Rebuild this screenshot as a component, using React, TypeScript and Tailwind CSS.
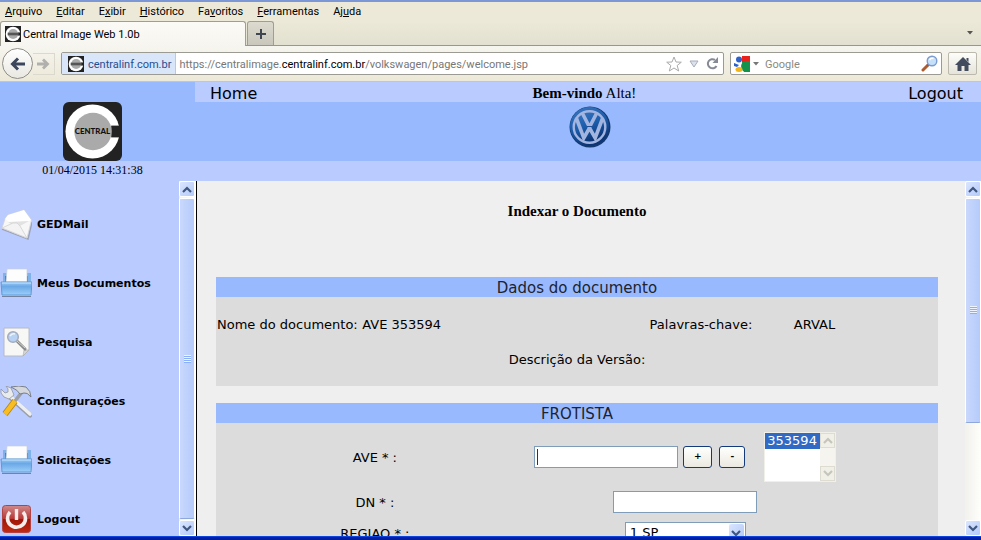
import React from "react";

const menus = [
  ["", "A", "rquivo"],
  ["", "E", "ditar"],
  ["E", "x", "ibir"],
  ["", "H", "istórico"],
  ["Fa", "v", "oritos"],
  ["", "F", "erramentas"],
  ["Aj", "u", "da"],
];

function CentralLogo({ className, label = true }: { className: string; label?: boolean }) {
  return (
    <svg viewBox="0 0 60 60" className={className} role="img" aria-label="Central">
      <rect width="60" height="60" rx={label ? 6 : 0} fill="#222" />
      <circle cx="30" cy="30" r="27.500" fill="#fff" />
      <path d="M49 24H60V36H49Z" fill="#222" />
      <circle cx="30.500" cy="30" r="19" fill="#aaa" />
      {label ? (
        <text x="12" y="33" fontFamily="Lato, 'Liberation Sans', sans-serif" fontWeight="900" fontSize="8" fill="#111">
          CENTRAL
        </text>
      ) : (
        <path d="M10 25H50V35H10Z" fill="#555" />
      )}
    </svg>
  );
}

function VwLogo() {
  return (
    <svg viewBox="0 0 42 42" className="size-[42px]" role="img" aria-label="Volkswagen">
      <defs>
        <linearGradient id="vw" x1="0" y1="0" x2="0.400" y2="1">
          <stop offset="0" stopColor="#3d78c0" />
          <stop offset="0.500" stopColor="#1d5fae" />
          <stop offset="1" stopColor="#0c3576" />
        </linearGradient>
      </defs>
      <circle cx="21" cy="21" r="20.500" fill="#15386f" />
      <circle cx="20.500" cy="20.500" r="19.500" fill="url(#vw)" />
      <circle cx="20.500" cy="21" r="15.800" fill="url(#vw)" stroke="#a2b4e0" strokeWidth="2.400" />
      <g fill="none" stroke="#a2b4e0" strokeWidth="3.600" strokeLinejoin="miter">
        <path d="M13.500 7.500L20.500 21L27.500 7.500" />
        <path d="M7.500 12.500L14.800 32L20.500 22L26.200 32L33.500 12.500" />
      </g>
      <path d="M18 20.500H23" stroke="#234f94" strokeWidth="1" />
    </svg>
  );
}

function MailIcon() {
  return (
    <svg viewBox="0 0 32 32" className="size-8" aria-hidden="true">
      <path d="M2 20L28 30L32 13" fill="none" stroke="#9ba3ba" strokeWidth="1.500" />
      <path d="M2 19L5 10L8 6L24 1L31.500 11L27 29Z" fill="#f7f7f7" stroke="#d4d4d4" strokeWidth="0.800" />
      <path d="M5 10L8 6L24 1L31 11L19 16L12 15Z" fill="#fff" />
      <path d="M8 13L29 12L20 17L18 15L14 14L12 16Z" fill="#e2e2e2" />
      <path d="M2 19L13 14L17 14L20 17L27 29Z" fill="#f3f3f3" stroke="#d0d0d0" strokeWidth="0.800" />
    </svg>
  );
}

function DrawerIcon() {
  return (
    <svg viewBox="0 0 32 32" className="size-8" aria-hidden="true">
      <defs>
        <linearGradient id="drawer" x1="0" y1="0" x2="0" y2="1">
          <stop offset="0" stopColor="#9ccbf5" />
          <stop offset="0.350" stopColor="#6ba8e6" />
          <stop offset="1" stopColor="#9ccffa" />
        </linearGradient>
      </defs>
      <path d="M3 5H31V16H3Z" fill="#7fb2e8" />
      <path d="M5 8H28V16H5Z" fill="#3e7cc4" />
      <path d="M7 1H27V14H6Z" fill="#fdfdfd" stroke="#c5cfdd" strokeWidth="0.700" />
      <path d="M1 14H32L31 27H2Z" fill="url(#drawer)" stroke="#5f9ad6" strokeWidth="1" />
      <path d="M2 15H31" stroke="#c4e2fb" />
      <path d="M2 28.500H31" stroke="#7482a0" />
    </svg>
  );
}

function SearchPageIcon() {
  return (
    <svg viewBox="0 0 32 32" className="size-8" aria-hidden="true">
      <path d="M4 1H29V23L23 29H4Z" fill="#f7f7f5" stroke="#b5bac6" />
      <path d="M29 23H24L23 29Z" fill="#d4d5d8" stroke="#aaa" strokeWidth="0.600" />
      <path d="M17 14L25 22" stroke="#888" strokeWidth="3" strokeLinecap="round" />
      <path d="M17 14L25 21" stroke="#d4d4d4" strokeWidth="1" strokeLinecap="round" />
      <circle cx="13" cy="10" r="5.300" fill="#b8d2f4" stroke="#a4acbd" strokeWidth="1.500" />
      <path d="M10 9Q12 6 15 7" stroke="#eef6ff" strokeWidth="1.500" fill="none" />
    </svg>
  );
}

function ToolsIcon() {
  return (
    <svg viewBox="0 0 32 32" className="size-8" aria-hidden="true">
      <path d="M10 11L30 29" stroke="#9a9ea8" strokeWidth="5" strokeLinecap="round" />
      <path d="M10 10L30 28" stroke="#eceef0" strokeWidth="3.600" strokeLinecap="round" />
      <path d="M6 0L11 2L14 9L9 13L4 11L1 7L1 3L5 7L8 6L8 3Z" fill="#e8eaec" stroke="#9094a0" strokeWidth="0.800" />
      <path d="M22 6L15 15" stroke="#9a9ea6" strokeWidth="3.600" />
      <path d="M11 1Q19 -1 26 1Q31 5 31 11Q27 6 24 7L20 8Q18 4 11 1Z" fill="#d4d8dc" stroke="#70757e" strokeWidth="0.900" />
      <path d="M15 15L5 28" stroke="#b88408" strokeWidth="6.200" />
      <path d="M15 15L5 28" stroke="#f8bd22" strokeWidth="4.600" />
    </svg>
  );
}

function PowerIcon() {
  return (
    <svg viewBox="0 0 32 32" className="size-8" aria-hidden="true">
      <defs>
        <linearGradient id="power" x1="0" y1="0" x2="0" y2="1">
          <stop offset="0" stopColor="#cf8a8c" />
          <stop offset="0.480" stopColor="#b93a38" />
          <stop offset="0.520" stopColor="#a01608" />
          <stop offset="1" stopColor="#c22a14" />
        </linearGradient>
      </defs>
      <rect x="2.500" y="1.500" width="28" height="27" rx="3" fill="url(#power)" stroke="#b04444" />
      <path d="M10 8A9 9 0 1 0 23 8" fill="none" stroke="#f6ecec" strokeWidth="3.600" />
      <path d="M16.500 5V16" stroke="#f6ecec" strokeWidth="3.400" />
    </svg>
  );
}

const sideItems = [
  { label: "GEDMail", Icon: MailIcon },
  { label: "Meus Documentos", Icon: DrawerIcon },
  { label: "Pesquisa", Icon: SearchPageIcon },
  { label: "Configurações", Icon: ToolsIcon },
  { label: "Solicitações", Icon: DrawerIcon },
  { label: "Logout", Icon: PowerIcon },
];

function Chevron({ up = false, color = "#3f5780" }: { up?: boolean; color?: string }) {
  return (
    <svg viewBox="0 0 10 7" className="h-[7px] w-[10px]" aria-hidden="true">
      <path d={up ? "M1 6L5 2L9 6" : "M1 1L5 5L9 1"} fill="none" stroke={color} strokeWidth="2.200" />
    </svg>
  );
}

function ScrollBar({ thumb }: { thumb: string }) {
  const end =
    "flex h-4 w-full shrink-0 items-center justify-center rounded-[2px] border border-white bg-linear-to-br from-[#dbe6ff] to-[#b4cafa]";
  return (
    <div className="flex w-4 shrink-0 flex-col bg-linear-to-r from-[#f2f1ec] to-[#fefefb]">
      <button className={end} aria-label="Rolar para cima"><Chevron up /></button>
      <div className="min-h-0 flex-1 py-px">
        <div className={`flex flex-col items-center justify-center rounded-[2px] border border-white border-b-[#8fa8dc] bg-linear-to-r from-[#c9d8fc] to-[#b5cbfb] ${thumb}`}>
          {[0, 1, 2, 3].map((n) => (
            <span key={n} className="h-[2px] w-[7px] border-t border-[#eef4ff] bg-[#8cb0f8]" />
          ))}
        </div>
      </div>
      <button className={end} aria-label="Rolar para baixo"><Chevron /></button>
    </div>
  );
}

function Browser() {
  return (
    <div className="shrink-0 border-t-2 border-[#7b97d6] bg-[#ece9d8] font-['Roboto','Liberation_Sans',sans-serif] text-[11px] text-black">
      <nav className="flex h-[19px] items-center gap-[14px] px-[5px]">
        {menus.map(([a, b, c]) => (
          <button key={c} className="leading-4">{a}<u>{b}</u>{c}</button>
        ))}
      </nav>
      <div className="flex h-[25px] items-stretch border-b border-[#99978c] bg-linear-to-b from-[#ece9d8] to-[#e2e0d0]">
        <div className="-mb-px flex w-[246px] items-center gap-[2px] rounded-t-[3px] border border-b-0 border-[#a09e93] bg-linear-to-b from-[#fbfaf6] to-[#f6f5ef] pl-1">
          <CentralLogo className="size-4" label={false} />
          <span className="pt-[3px]">Central Image Web 1.0b</span>
        </div>
        <button aria-label="Nova aba" className="ml-px flex w-[27px] items-center justify-center rounded-t-[3px] border border-b-0 border-[#a09e93] bg-linear-to-b from-[#dddbcf] to-[#c9c7bb]">
          <svg viewBox="0 0 10 10" className="size-[10px]"><path d="M5 0V10M0 5H10" stroke="#404650" strokeWidth="2" /></svg>
        </button>
        <button aria-label="Listar abas" className="mr-[8px] ml-auto">
          <svg viewBox="0 0 6 4" className="h-1 w-[6px]"><path d="M0 0H6L3 3.500Z" fill="#555" /></svg>
        </button>
      </div>
      <div className="flex h-9 items-center border-b border-[#c9c6b4] bg-linear-to-b from-[#f6f5ef] to-[#ece9d8] pr-1 pl-[2px]">
        <button aria-label="Voltar" className="flex size-[31px] items-center justify-center rounded-full border border-[#8f8e88] bg-linear-to-b from-white to-[#e9e8e2]">
          <svg viewBox="0 0 16 14" className="h-[14px] w-4"><path d="M8 1.500L2.500 7L8 12.500M3 7H15" fill="none" stroke="#3c475e" strokeWidth="3" /></svg>
        </button>
        <button aria-label="Avançar" className="flex h-[22px] w-[22px] items-center justify-center border border-l-0 border-[#dbd9ce]">
          <svg viewBox="0 0 13 12" className="h-3 w-[13px]"><path d="M6 1.500L10.500 6L6 10.500M0 6H10" fill="none" stroke="#b0b0ad" strokeWidth="2.800" /></svg>
        </button>
        <div className="ml-[6px] flex h-[23px] flex-1 items-stretch rounded-[2px] border border-[#9b9a93] bg-white">
          <div className="flex items-center gap-1 border-r border-[#b8c8e6] bg-[#d9e5f8] pr-1 pl-[6px] text-[#1f4f93]">
            <CentralLogo className="size-4" label={false} />
            <span className="pt-[3px]">centralinf.com.br</span>
          </div>
          <div role="textbox" aria-label="Endereço" tabIndex={0} className="flex flex-1 items-center pt-[3px] pl-[3px] text-[#777]">
            <span>https://centralimage.<span className="text-black">centralinf.com.br</span>/volkswagen/pages/welcome.jsp</span>
          </div>
          <div className="flex items-center gap-[7px] pr-1">
            <button aria-label="Favoritar"><svg viewBox="0 0 16 16" className="size-4"><path d="M8 1L10 6L15.300 6.200L11.200 9.500L12.700 15L8 12L3.300 15L4.800 9.500L0.700 6.200L6 6Z" fill="#fff" stroke="#aaa" /></svg></button>
            <button aria-label="Histórico de endereços"><svg viewBox="0 0 10 8" className="h-2 w-[10px]"><path d="M1 1H9L5 7Z" fill="#dde2ec" stroke="#a5adbb" /></svg></button>
            <button aria-label="Recarregar"><svg viewBox="0 0 13 13" className="size-[13px]"><path d="M10.500 9A4.600 4.600 0 1 1 9 2.900" fill="none" stroke="#858a94" strokeWidth="2" /><path d="M12 0V6H6.500Z" fill="#858a94" /></svg></button>
          </div>
        </div>
        <div className="ml-[6px] flex h-[23px] w-[212px] items-center rounded-[2px] border border-[#9b9a93] bg-white px-[3px]">
          <svg viewBox="0 0 16 16" className="size-4 shrink-0" aria-hidden="true">
            <path d="M8 0H16V6H8Z" fill="#e8221c" /><path d="M8 6L16 5V16H10Z" fill="#12924a" />
            <path d="M9 6Q5 10 9 15L11 16V6Z" fill="#12924a" />
            <circle cx="5" cy="3.500" r="3" fill="#2f62c8" /><path d="M0 7L5 9L3 11L0 10Z" fill="#2f62c8" />
            <ellipse cx="5" cy="13.500" rx="3.500" ry="2.500" fill="#f0b41c" />
          </svg>
          <svg viewBox="0 0 6 4" className="ml-[3px] h-1 w-[6px] shrink-0" aria-hidden="true"><path d="M0 0H6L3 3.500Z" fill="#777" /></svg>
          <input aria-label="Pesquisar com Google" placeholder="Google" className="ml-[6px] min-w-0 flex-1 pt-[3px] outline-none placeholder:text-[#8a8a80]" />
          <button aria-label="Pesquisar">
            <svg viewBox="0 0 17 17" className="size-[17px]"><path d="M7 10L2 15" stroke="#b05a30" strokeWidth="3" strokeLinecap="round" /><path d="M8 9L6 11" stroke="#667" strokeWidth="2" /><circle cx="11" cy="6" r="4.800" fill="#c6e0fa" stroke="#7c9cd0" strokeWidth="1.400" /><path d="M8.500 5Q10 2.500 12.500 3.500" stroke="#fff" strokeWidth="1.500" fill="none" /></svg>
          </button>
        </div>
        <button aria-label="Página inicial" className="ml-[6px] flex h-[23px] w-[29px] items-center justify-center rounded-[2px] border border-[#bbb9ae] bg-linear-to-b from-[#fdfdfb] to-[#e6e4d9]">
          <svg viewBox="0 0 16 14" className="h-[14px] w-4"><path d="M8 0L16 8H13.500V14H9.500V9H6.500V14H2.500V8H0Z" fill="#434c5e" /><path d="M11.500 1H13.500V5L11.500 3Z" fill="#434c5e" /></svg>
        </button>
      </div>
    </div>
  );
}

function Header() {
  return (
    <header className="flex shrink-0">
      <div className="flex w-[195px] flex-col bg-[#99b9ff]">
        <div className="flex h-[79px] items-end pl-[63px]"><CentralLogo className="size-[59px]" /></div>
        <time className="h-5 bg-[#bacbff] pr-[10px] text-center font-['Liberation_Serif',serif] text-xs leading-[18px]">01/04/2015 14:31:38</time>
      </div>
      <div className="flex flex-1 flex-col bg-[#99b9ff]">
        <div className="grid h-5 grid-cols-3 items-center bg-[#bacbff] pr-[18px] pl-[15px] text-base leading-[23px]">
          <a href="#home">Home</a>
          <p className="pr-1 text-center font-['Liberation_Serif',serif] text-[15px]"><b>Bem-vindo</b> Alta!</p>
          <a href="#logout" className="text-right">Logout</a>
        </div>
        <div className="flex h-[59px] justify-center pt-1 pl-[3px]"><VwLogo /></div>
        <div className="h-5 bg-[#bacbff]" />
      </div>
    </header>
  );
}

function Bar({ children }: { children: React.ReactNode }) {
  return <h2 className="h-5 bg-[#99b9ff] text-center text-[15px] leading-[23px] text-[#1c2430]">{children}</h2>;
}

const field = "h-[22px] w-[144px] border border-[#7f9db9] bg-white px-1 outline-none";
const small =
  "flex h-[22px] items-center justify-center rounded-[3px] border border-[#123a7c] bg-linear-to-b from-white to-[#ebe9df] text-[9px] font-bold";
const row = "grid grid-cols-[44fr_42fr_14fr] items-center";
const caption = "pt-px text-center";

function Content() {
  return (
    <main className="min-w-0 flex-1 overflow-hidden bg-[#efefef] pr-[27px] pl-[19px] text-[13px]">
      <h1 className="mt-5 mb-[56px] text-center font-['Liberation_Serif',serif] text-[15px] leading-5 font-bold">Indexar o Documento</h1>
      <section className="mb-[17px] bg-[#dcdcdc]">
        <Bar>Dados do documento</Bar>
        <dl className="flex h-[89px] flex-col justify-center gap-[15px] pt-[2px] leading-5">
          <div className="grid grid-cols-[20fr_40fr_20fr_20fr] pl-px">
            <dt className="whitespace-nowrap">Nome do documento:</dt>
            <dd className="pl-px">AVE 353594</dd>
            <dt>Palavras-chave:</dt>
            <dd>ARVAL</dd>
          </div>
          <div className="text-center"><dt>Descrição da Versão:</dt></div>
        </dl>
      </section>
      <section className="bg-[#dcdcdc]">
        <Bar>FROTISTA</Bar>
        <form className="flex flex-col gap-[9px] pt-[9px] pb-8">
          <div className={row}>
            <label htmlFor="ave" className={caption}>AVE * :</label>
            <div className="flex items-center justify-center">
              <input id="ave" className={`${field} bg-[linear-gradient(#333,#333)] bg-[length:1px_16px] bg-[position:2px_center] bg-no-repeat`} />
              <button type="button" className={`${small} ml-[5px] w-[29px]`}>+</button>
              <button type="button" className={`${small} ml-[7px] w-[26px]`}>-</button>
              <div className="ml-[19px] flex h-[50px] w-[72px] shrink-0 border border-[#f0efe8] bg-white">
                <select multiple aria-label="AVEs adicionadas" defaultValue={["353594"]} className="min-w-0 flex-1 overflow-hidden border-0 p-0 outline-none">
                  <option className="h-4 bg-[linear-gradient(#316ac5,#316ac5)] p-0 pl-[2px] leading-[17px] [-webkit-text-fill-color:#fff]" value="353594">353594</option>
                </select>
                <div className="flex w-[15px] flex-col justify-between bg-[#f5f4ee]">
                  <button type="button" aria-label="Subir lista" className="flex h-[15px] items-center justify-center border border-[#dedcd0] bg-[#f0efe8]"><Chevron up color="#c6c5bb" /></button>
                  <button type="button" aria-label="Descer lista" className="flex h-[15px] items-center justify-center border border-[#dedcd0] bg-[#f0efe8]"><Chevron color="#c6c5bb" /></button>
                </div>
              </div>
            </div>
          </div>
          <div className={row}>
            <label htmlFor="dn" className={caption}>DN * :</label>
            <div className="flex justify-center"><input id="dn" className={field} /></div>
          </div>
          <div className={row}>
            <label htmlFor="regiao" className={caption}>REGIAO * :</label>
            <div className="flex justify-center">
              <div className="grid w-[121px] items-center">
                <select id="regiao" className="col-start-1 row-start-1 h-[22px] appearance-none border border-[#7f9db9] bg-white pl-1 outline-none">
                  <option>1 SP</option>
                </select>
                <span className="pointer-events-none col-start-1 row-start-1 mr-[2px] flex h-[18px] w-[15px] items-center justify-center justify-self-end rounded-[2px] bg-linear-to-br from-[#dbe6ff] to-[#aec5f5]"><Chevron /></span>
              </div>
            </div>
          </div>
        </form>
      </section>
    </main>
  );
}

export default function App() {
  return (
    <div className="flex h-screen flex-col overflow-hidden bg-[#bacbff] font-['DejaVu_Sans',Verdana,sans-serif] text-black">
      <Browser />
      <Header />
      <div className="flex min-h-0 flex-1">
        <aside className="flex w-[197px] shrink-0 overflow-hidden border-r border-black bg-[#bacbff]">
          <nav className="flex-1 pt-[14px]">
            {sideItems.map(({ label, Icon }) => (
              <a key={label} href="#menu" className="flex h-[59px] items-center gap-[5px] text-[11px] font-bold whitespace-nowrap">
                <Icon />
                <span className="pt-[2px]">{label}</span>
              </a>
            ))}
          </nav>
          <ScrollBar thumb="h-full" />
          <div className="w-px bg-white" />
        </aside>
        <Content />
        <ScrollBar thumb="h-[70%]" />
      </div>
      <div className="h-1 shrink-0 border-t border-[#0a46e0] bg-[#001f9e]" />
    </div>
  );
}
